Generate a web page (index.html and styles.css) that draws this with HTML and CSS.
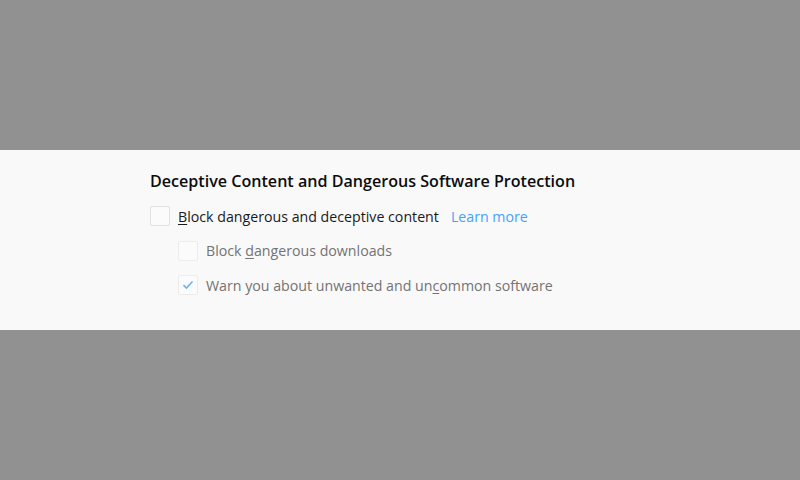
FILE: index.html
```html
<!DOCTYPE html>
<html lang="en">
<head>
    <meta charset="UTF-8">
    <title>Deceptive Content Protection</title>
    <link rel="stylesheet" href="styles.css">
</head>
<body>
    <div class="backdrop-top"></div>

    <div class="panel">
        <h2 class="panel-title">Deceptive Content and Dangerous Software Protection</h2>

        <label class="option">
            <span class="box"></span>
            <span class="label-text"><u>B</u>lock dangerous and deceptive content</span>
            <a class="learn-more" href="#">Learn more</a>
        </label>

        <div class="sub-options">
            <label class="option disabled">
                <span class="box"></span>
                <span class="label-text">Block <u>d</u>angerous downloads</span>
            </label>
            <label class="option disabled">
                <span class="box checked">
                    <svg width="12" height="10" viewBox="0 0 12 10"><path d="M1.5 5.2 L4.4 8 L10.5 1.5" fill="none" stroke="#6db3f5" stroke-width="1.6"/></svg>
                </span>
                <span class="label-text">Warn you about unwanted and un<u>c</u>ommon software</span>
            </label>
        </div>
    </div>
</body>
</html>
```

FILE: styles.css
```css
body {
    margin: 0;
    background-color: #919191;
    font-family: 'Open Sans', 'Noto Sans', sans-serif;
    height: 480px;
    overflow: hidden;
}

.backdrop-top {
    height: 150px;
}

.panel {
    background-color: #f9f9fa;
    height: 180px;
    box-sizing: border-box;
    padding: 19px 0 0 150px;
}

.panel-title {
    margin: 0 0 6px 0;
    font-size: 16.1px;
    font-weight: 600;
    color: #0c0c0d;
    line-height: 24px;
}

.option {
    display: flex;
    align-items: center;
    height: 34.5px;
    font-size: 14.2px;
    color: #1a1a1b;
}

.option u {
    text-decoration-thickness: 1px;
    text-underline-offset: 2px;
}

.box {
    width: 18px;
    height: 18px;
    border: 1px solid #e1e1e2;
    border-radius: 2px;
    background-color: #fbfbfb;
    margin-right: 8px;
    display: flex;
    align-items: center;
    justify-content: center;
}

.learn-more {
    color: #45a1ff;
    text-decoration: none;
    margin-left: 12px;
}

.sub-options {
    padding-left: 28px;
}

.option.disabled {
    color: #737373;
}

.option.disabled .box {
    border-color: #ececec;
}
```
